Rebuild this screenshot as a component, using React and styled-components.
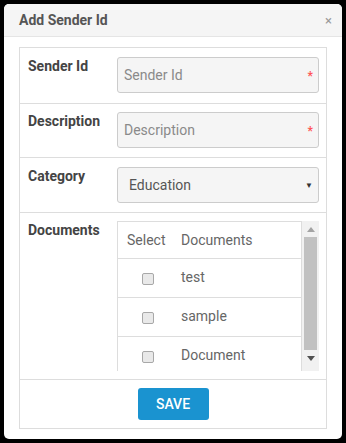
import React from "react";
import styled, { createGlobalStyle } from "styled-components";

const GlobalStyle = createGlobalStyle`
  html, body {
    margin: 0;
    padding: 0;
    background: #000;
    font-family: Roboto, "Liberation Sans", sans-serif;
  }
  * {
    box-sizing: border-box;
  }
`;

const documents = ["test", "sample", "Document"];

function App() {
  return (
    <Page>
      <GlobalStyle />
      <Modal>
        <Header>
          <Title>Add Sender Id</Title>
          <Close>×</Close>
        </Header>
        <Body>
          <FormBox>
            <Row $top={9} $bottom={10}>
              <Label>Sender Id</Label>
              <Field>
                <Input placeholder="Sender Id" />
                <Required>*</Required>
              </Field>
            </Row>
            <Row $top={8} $bottom={9}>
              <Label>Description</Label>
              <Field>
                <Input placeholder="Description" />
                <Required>*</Required>
              </Field>
            </Row>
            <Row $top={9} $bottom={9}>
              <Label>Category</Label>
              <Field>
                <Select defaultValue="Education">
                  <option>Education</option>
                </Select>
                <Caret>▼</Caret>
              </Field>
            </Row>
            <Row $top={8} $bottom={8}>
              <Label>Documents</Label>
              <Scroller>
                <TableWrap>
                  <Table>
                    <thead>
                      <tr>
                        <Th>Select</Th>
                        <Th>Documents</Th>
                      </tr>
                    </thead>
                    <tbody>
                      {documents.map((d) => (
                        <tr key={d}>
                          <Td className="check">
                            <Check type="checkbox" />
                          </Td>
                          <Td>{d}</Td>
                        </tr>
                      ))}
                    </tbody>
                  </Table>
                </TableWrap>
                <ScrollBar>
                  <ScrollArrow>
                    <svg width="8" height="5" viewBox="0 0 8 5">
                      <polygon points="0,5 4,0 8,5" fill="#a3a3a3" />
                    </svg>
                  </ScrollArrow>
                  <ScrollThumb />
                  <ScrollArrow>
                    <svg width="8" height="5" viewBox="0 0 8 5">
                      <polygon points="0,0 8,0 4,5" fill="#505050" />
                    </svg>
                  </ScrollArrow>
                </ScrollBar>
              </Scroller>
            </Row>
            <Footer>
              <SaveButton>SAVE</SaveButton>
            </Footer>
          </FormBox>
        </Body>
      </Modal>
    </Page>
  );
}

const Page = styled.div`
  padding: 4px;
`;

const Modal = styled.div`
  width: 338px;
  height: 435px;
  background: #fff;
  border-radius: 5px;
  overflow: hidden;
  display: flex;
  flex-direction: column;
`;

const Header = styled.div`
  height: 33px;
  flex: none;
  display: flex;
  align-items: center;
  justify-content: space-between;
  padding: 0 10px 0 15px;
  background: #f5f5f5;
  border-bottom: 1px solid #e5e5e5;
`;

const Title = styled.h4`
  margin: 0;
  font-size: 14px;
  font-weight: 700;
  color: #555;
`;

const Close = styled.span`
  font-size: 13px;
  color: #999;
  line-height: 1;
`;

const Body = styled.div`
  padding: 10px 15px 11px;
`;

const FormBox = styled.div`
  border: 1px solid #ddd;
`;

const Row = styled.div`
  display: flex;
  align-items: flex-start;
  padding: ${(p) => p.$top}px 7px ${(p) => p.$bottom}px 8px;
  border-bottom: 1px solid #ddd;
`;

const Label = styled.label`
  width: 89px;
  flex: none;
  font-size: 14px;
  font-weight: 700;
  color: #444;
  line-height: 18px;
`;

const Field = styled.div`
  position: relative;
  flex: 1;
`;

const Input = styled.input`
  display: block;
  width: 100%;
  height: 36px;
  padding: 0 20px 0 6px;
  background: #f5f5f5;
  border: 1px solid #ccc;
  border-radius: 3px;
  font-family: inherit;
  font-size: 14px;
  color: #555;
  outline: none;
  &::placeholder {
    color: #8a8a8a;
  }
`;

const Required = styled.span`
  position: absolute;
  right: 6px;
  top: 13px;
  color: #f55;
  font-size: 12px;
  font-weight: 700;
  line-height: 1;
`;

const Select = styled.select`
  display: block;
  width: 100%;
  height: 36px;
  padding: 0 20px 0 11px;
  appearance: none;
  background: #f5f5f5;
  border: 1px solid #ccc;
  border-radius: 3px;
  font-family: inherit;
  font-size: 14px;
  color: #555;
  outline: none;
`;

const Caret = styled.span`
  position: absolute;
  right: 6px;
  top: 14px;
  font-size: 8px;
  color: #333;
  pointer-events: none;
`;

const Scroller = styled.div`
  flex: 1;
  height: 150px;
  display: flex;
  overflow: hidden;
`;

const TableWrap = styled.div`
  flex: 1;
  overflow: hidden;
  border-top: 1px solid #ddd;
  border-left: 1px solid #ddd;
`;

const ScrollBar = styled.div`
  width: 17px;
  flex: none;
  display: flex;
  flex-direction: column;
  background: #f1f1f1;
`;

const ScrollArrow = styled.div`
  height: 16px;
  flex: none;
  display: flex;
  align-items: center;
  justify-content: center;
`;

const ScrollThumb = styled.div`
  height: 113px;
  margin: 0 2px;
  background: #c1c1c1;
`;

const Table = styled.table`
  width: 100%;
  border-collapse: collapse;
  font-size: 14px;
  color: #666;
`;

const Th = styled.th`
  text-align: left;
  font-weight: 400;
  height: 36px;
  padding: 0 0 0 9px;
  border-bottom: 1px solid #ddd;
  border-right: 1px solid #ddd;
  &:first-child {
    width: 54px;
    border-right: none;
  }
`;

const Td = styled.td`
  height: 39px;
  padding: 0 0 2px 9px;
  border-bottom: 1px solid #ddd;
  border-right: 1px solid #ddd;
  &.check {
    border-right: none;
    text-align: center;
    padding: 0 0 0 6px;
  }
`;

const Check = styled.input`
  appearance: none;
  display: inline-block;
  margin: 0;
  width: 12px;
  height: 12px;
  vertical-align: middle;
  background: #e9e9e9;
  border: 1px solid #a8a8a8;
  border-radius: 2px;
`;

const Footer = styled.div`
  display: flex;
  justify-content: center;
  padding: 8px 0;
`;

const SaveButton = styled.button`
  width: 71px;
  height: 32px;
  border: none;
  border-radius: 3px;
  background: #1a93d0;
  color: #fff;
  font-family: inherit;
  font-size: 14px;
  font-weight: 500;
`;

export default App;
